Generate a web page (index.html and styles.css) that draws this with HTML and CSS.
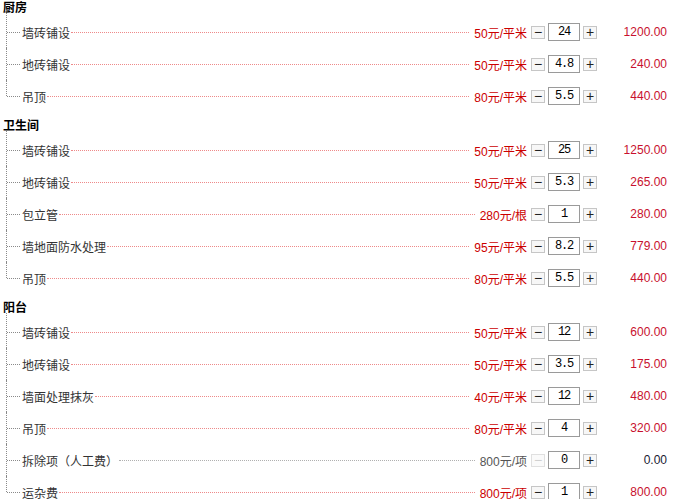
FILE: index.html
```html
<!DOCTYPE html>
<html lang="zh-CN">
<head>
<meta charset="utf-8">
<title>装修报价</title>
<link rel="stylesheet" href="styles.css">
</head>
<body>
<div class="calc">
  <section class="group">
    <h3 class="group-title">厨房</h3>
    <ul class="items">
      <li class="item"><span class="name">墙砖铺设</span><span class="leader"></span><span class="price">50元/平米</span><span class="qty"><button class="btn">−</button><input class="num" value="24"><button class="btn">+</button></span><span class="total">1200.00</span></li>
      <li class="item"><span class="name">地砖铺设</span><span class="leader"></span><span class="price">50元/平米</span><span class="qty"><button class="btn">−</button><input class="num" value="4.8"><button class="btn">+</button></span><span class="total">240.00</span></li>
      <li class="item"><span class="name">吊顶</span><span class="leader"></span><span class="price">80元/平米</span><span class="qty"><button class="btn">−</button><input class="num" value="5.5"><button class="btn">+</button></span><span class="total">440.00</span></li>
    </ul>
  </section>
  <section class="group">
    <h3 class="group-title">卫生间</h3>
    <ul class="items">
      <li class="item"><span class="name">墙砖铺设</span><span class="leader"></span><span class="price">50元/平米</span><span class="qty"><button class="btn">−</button><input class="num" value="25"><button class="btn">+</button></span><span class="total">1250.00</span></li>
      <li class="item"><span class="name">地砖铺设</span><span class="leader"></span><span class="price">50元/平米</span><span class="qty"><button class="btn">−</button><input class="num" value="5.3"><button class="btn">+</button></span><span class="total">265.00</span></li>
      <li class="item"><span class="name">包立管</span><span class="leader"></span><span class="price">280元/根</span><span class="qty"><button class="btn">−</button><input class="num" value="1"><button class="btn">+</button></span><span class="total">280.00</span></li>
      <li class="item"><span class="name">墙地面防水处理</span><span class="leader"></span><span class="price">95元/平米</span><span class="qty"><button class="btn">−</button><input class="num" value="8.2"><button class="btn">+</button></span><span class="total">779.00</span></li>
      <li class="item"><span class="name">吊顶</span><span class="leader"></span><span class="price">80元/平米</span><span class="qty"><button class="btn">−</button><input class="num" value="5.5"><button class="btn">+</button></span><span class="total">440.00</span></li>
    </ul>
  </section>
  <section class="group">
    <h3 class="group-title">阳台</h3>
    <ul class="items">
      <li class="item"><span class="name">墙砖铺设</span><span class="leader"></span><span class="price">50元/平米</span><span class="qty"><button class="btn">−</button><input class="num" value="12"><button class="btn">+</button></span><span class="total">600.00</span></li>
      <li class="item"><span class="name">地砖铺设</span><span class="leader"></span><span class="price">50元/平米</span><span class="qty"><button class="btn">−</button><input class="num" value="3.5"><button class="btn">+</button></span><span class="total">175.00</span></li>
      <li class="item"><span class="name">墙面处理抹灰</span><span class="leader"></span><span class="price">40元/平米</span><span class="qty"><button class="btn">−</button><input class="num" value="12"><button class="btn">+</button></span><span class="total">480.00</span></li>
      <li class="item"><span class="name">吊顶</span><span class="leader"></span><span class="price">80元/平米</span><span class="qty"><button class="btn">−</button><input class="num" value="4"><button class="btn">+</button></span><span class="total">320.00</span></li>
      <li class="item is-off"><span class="name">拆除项（人工费）</span><span class="leader"></span><span class="price">800元/项</span><span class="qty"><button class="btn" disabled>−</button><input class="num" value="0"><button class="btn">+</button></span><span class="total">0.00</span></li>
      <li class="item"><span class="name">运杂费</span><span class="leader"></span><span class="price">800元/项</span><span class="qty"><button class="btn">−</button><input class="num" value="1"><button class="btn">+</button></span><span class="total">800.00</span></li>
    </ul>
  </section>
</div>
</body>
</html>
```

FILE: styles.css
```css
html, body {
  margin: 0;
  padding: 0;
  background: #fff;
}

body {
  font-family: "Liberation Sans", "Noto Sans CJK SC", sans-serif;
  font-size: 12px;
  color: #333;
  overflow: hidden;
}

.calc {
  padding: 0 6px 0 0;
}

.group {
  margin: 0 0 6px 0;
}

.group-title {
  margin: 0;
  padding-left: 3px;
  height: 16px;
  line-height: 16px;
  font-size: 12px;
  font-weight: bold;
  color: #000;
}

.items {
  list-style: none;
  margin: 0;
  padding: 0;
}

.item {
  position: relative;
  display: flex;
  align-items: center;
  height: 32px;
  padding-left: 22px;
}

.item::before {
  content: "";
  position: absolute;
  left: 6px;
  top: 0;
  bottom: 0;
  border-left: 1px dotted #8a8a8a;
}

.item:first-child::before {
  top: -3px;
}

.item:last-child::before {
  bottom: 16px;
}

.item::after {
  content: "";
  position: absolute;
  left: 7px;
  top: 16px;
  width: 13px;
  border-top: 1px dotted #8a8a8a;
}

.name {
  color: #333;
  white-space: nowrap;
}

.leader {
  flex: 1;
  align-self: center;
  margin: 1px 5px 0 1px;
  border-top: 1px dotted #ee8a8a;
}

.price {
  color: #c00;
  white-space: nowrap;
}

.qty {
  display: flex;
  align-items: center;
  gap: 3px;
  margin-left: 4px;
}

.btn {
  box-sizing: border-box;
  width: 14px;
  height: 13px;
  margin: 0;
  padding: 0;
  border: 1px solid #c6c6c6;
  background: #f7f7f7;
  color: #222;
  font-family: "Liberation Sans", sans-serif;
  font-size: 14px;
  line-height: 10px;
  text-align: center;
}

.btn:disabled {
  color: #d0d0d0;
  border-color: #e0e0e0;
  background: #fafafa;
}

.num {
  box-sizing: border-box;
  width: 32px;
  height: 18px;
  margin: 0;
  padding: 0;
  border: 1px solid #9a9a9a;
  background: #fff;
  color: #000;
  font-family: "Liberation Mono", monospace;
  font-size: 12px;
  letter-spacing: -1.2px;
  text-align: center;
  outline: none;
}

.total {
  width: 70px;
  text-align: right;
  color: #c8102e;
  white-space: nowrap;
}

.is-off .leader {
  border-top-color: #b0b0b0;
}

.is-off .price {
  color: #555;
}

.is-off .total {
  color: #1a1a33;
}
```
